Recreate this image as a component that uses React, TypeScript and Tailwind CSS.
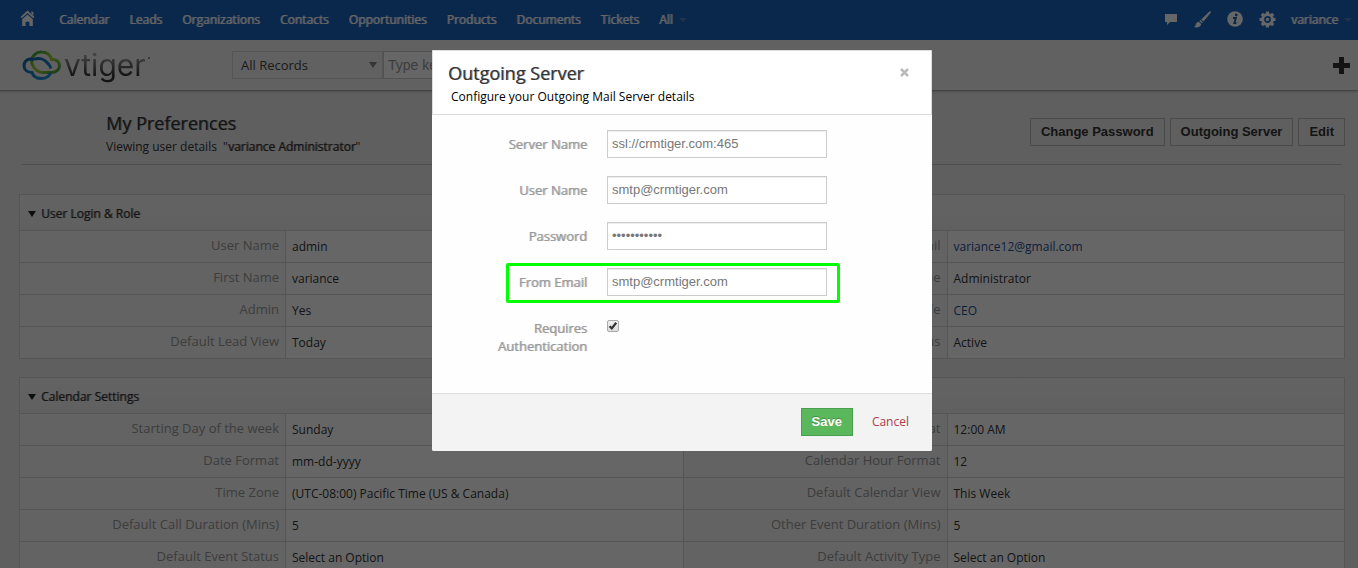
import { useState } from "react";

type Field = { label: string; value: string; link?: boolean };

const navItems = [
  "Calendar",
  "Leads",
  "Organizations",
  "Contacts",
  "Opportunities",
  "Products",
  "Documents",
  "Tickets",
];

const loginRows: [Field, Field][] = [
  [
    { label: "User Name", value: "admin" },
    { label: "Primary Email", value: "variance12@gmail.com", link: true },
  ],
  [
    { label: "First Name", value: "variance" },
    { label: "Last Name", value: "Administrator" },
  ],
  [
    { label: "Admin", value: "Yes" },
    { label: "Role", value: "CEO", link: true },
  ],
  [
    { label: "Default Lead View", value: "Today" },
    { label: "Status", value: "Active" },
  ],
];

const calendarRows: [Field, Field][] = [
  [
    { label: "Starting Day of the week", value: "Sunday" },
    { label: "Day starts at", value: "12:00 AM" },
  ],
  [
    { label: "Date Format", value: "mm-dd-yyyy" },
    { label: "Calendar Hour Format", value: "12" },
  ],
  [
    { label: "Time Zone", value: "(UTC-08:00) Pacific Time (US & Canada)" },
    { label: "Default Calendar View", value: "This Week" },
  ],
  [
    { label: "Default Call Duration (Mins)", value: "5" },
    { label: "Other Event Duration (Mins)", value: "5" },
  ],
  [
    { label: "Default Event Status", value: "Select an Option" },
    { label: "Default Activity Type", value: "Select an Option" },
  ],
];

export default function App() {
  const [open, setOpen] = useState(true);

  return (
    <div className="h-screen overflow-hidden bg-[#ededed] font-['Open_Sans','Noto_Sans',sans-serif] text-xs text-[#333]">
      <NavBar />
      <SearchBar />
      <main>
        <PageTitle onOutgoing={() => setOpen(true)} />
        <div className="ml-[19px] mr-[13px] mt-[29px] space-y-[18px]">
          <DetailTable title="User Login & Role" rows={loginRows} />
          <DetailTable title="Calendar Settings" rows={calendarRows} />
        </div>
      </main>
      {open && <OutgoingServerDialog onClose={() => setOpen(false)} />}
    </div>
  );
}

function NavBar() {
  return (
    <nav className="flex h-10 items-center justify-between bg-[#1a61bf] pl-5 pr-1.5 text-white [text-shadow:1px_0_rgba(255,255,255,0.8)]">
      <div className="flex items-center gap-5">
        <a href="#home" aria-label="Home" className="mr-[3px] pb-1">
          <HomeIcon />
        </a>
        {navItems.map((item) => (
          <a key={item} href={`#${item.toLowerCase()}`}>
            {item}
          </a>
        ))}
        <button className="flex items-center gap-1.5 [text-shadow:inherit]">
          All <Caret />
        </button>
      </div>
      <div className="flex items-center">
        <div className="mr-[15px] flex items-center gap-4 pb-0.5">
          <button aria-label="Chat">
            <svg width="13" height="13" viewBox="0 0 13 13" fill="currentColor">
              <path d="M0 1h12v8H5l-3 3V9H0z" />
            </svg>
          </button>
          <button aria-label="Theme">
            <svg width="17" height="17" viewBox="0 0 17 17" fill="currentColor">
              <path d="M16.600 .3c.5.400.300 1-.1 1.700L9.500 10.600 7.200 8.400 15.200.7c.5-.5 1-.7 1.400-.4zM6.500 9l2.300 2.200-1 1.100-2.400-2.200zM4.700 10.700l2.500 2.300c-.2 2-1.700 3.300-4 3.400-1.500.1-2.500-.1-3.200-.6 1.400-.5 1.500-1.400 1.900-2.800.4-1.300 1.400-2.200 2.800-2.300z" />
            </svg>
          </button>
          <button aria-label="Info">
            <svg width="16" height="16" viewBox="0 0 16 16">
              <circle cx="8" cy="8" r="7.800" fill="currentColor" />
              <circle cx="9.200" cy="4" r="1.400" fill="#1a61bf" />
              <path
                d="M6 7h2.800L7.400 12h1.900"
                fill="none"
                stroke="#1a61bf"
                strokeWidth="1.900"
              />
            </svg>
          </button>
          <button aria-label="Settings">
            <GearIcon />
          </button>
        </div>
        <button className="flex items-center gap-1.5 [text-shadow:inherit]">
          variance <Caret />
        </button>
      </div>
    </nav>
  );
}

function SearchBar() {
  return (
    <header className="flex h-[51px] items-center justify-between border-b border-[#aaa] bg-[#f3f3f3] pl-[22px] pr-2 shadow-[0_1px_2px_rgba(0,0,0,0.2)]">
      <div className="flex items-center">
        <a href="#home" aria-label="vtiger" className="flex w-[210px] items-center gap-0.5">
          <CloudLogo />
          <span className="bg-linear-to-b from-[#aaa] from-20% to-[#333] to-80% bg-clip-text font-['Inter',sans-serif] text-[30px] leading-9 text-transparent">
            vtiger
          </span>
          <span className="-mt-3.5 size-0.5 rounded-full bg-[#777]" />
        </a>
        <select
          aria-label="Search in"
          className="h-7 w-[151px] appearance-none border border-[#d5d5d5] bg-[#f3f3f3] pl-2 pt-0.5 text-[13px] text-[#444]"
        >
          <option>All Records</option>
        </select>
        <span className="-ml-3.5 mr-1.5 border-x-4 border-t-[6px] border-x-transparent border-t-[#888]" />
        <input
          aria-label="Keyword"
          placeholder="Type keyword and press enter"
          className="h-7 w-[220px] border border-[#ccc] bg-white px-1 font-['Liberation_Sans',Arial,sans-serif] text-sm placeholder:text-[#999]"
        />
      </div>
      <button aria-label="Quick create">
        <svg width="17" height="17" viewBox="0 0 17 17" fill="#333">
          <path d="M6 0h5v6h6v5h-6v6H6v-6H0V6h6z" />
        </svg>
      </button>
    </header>
  );
}

function PageTitle({ onOutgoing }: { onOutgoing: () => void }) {
  const button =
    "h-7 border border-[#bbb] px-2.5 font-['Liberation_Sans',Arial,sans-serif] text-[13px] font-bold";

  return (
    <div className="ml-[22px] mr-4 flex h-[74px] items-start justify-between border-b border-[#c4c4c4] pl-[84px]">
      <div className="pt-5">
        <h1 className="text-lg leading-6 [text-shadow:1px_0_rgba(51,51,51,0.5)]">
          My Preferences
        </h1>
        <p className="leading-6">
          Viewing user details &nbsp;&quot;
          <span className="[text-shadow:1px_0_rgba(51,51,51,0.6)]">
            variance Administrator
          </span>
          &quot;
        </p>
      </div>
      <div className="-mr-[3px] flex gap-[5px] pt-[27px]">
        <button className={button}>Change Password</button>
        <button className={button} onClick={onOutgoing}>
          Outgoing Server
        </button>
        <button className={button}>Edit</button>
      </div>
    </div>
  );
}

function DetailTable({ title, rows }: { title: string; rows: [Field, Field][] }) {
  return (
    <table className="w-full table-fixed border-collapse border border-[#d5d5d5]">
      <colgroup>
        <col className="w-[266px]" />
        <col className="w-[30%]" />
        <col className="w-[264px]" />
        <col />
      </colgroup>
      <thead>
        <tr className="h-9 bg-linear-to-b from-[#f8f8f8] to-[#f0f0f0]">
          <th colSpan={4} className="pl-2 pt-0.5 text-left font-normal">
            <span className="flex items-center gap-[5px]">
              <span className="border-x-4 border-t-[6px] border-x-transparent border-t-[#222]" />
              <span className="[text-shadow:1px_0_rgba(51,51,51,0.5)]">{title}</span>
            </span>
          </th>
        </tr>
      </thead>
      <tbody>
        {rows.map((row) => (
          <tr key={row[0].label} className="h-8 border-t border-[#d5d5d5]">
            {row.map((field) => (
              <FieldCells key={field.label} {...field} />
            ))}
          </tr>
        ))}
      </tbody>
    </table>
  );
}

function FieldCells({ label, value, link }: Field) {
  return (
    <>
      <th
        scope="row"
        className="bg-[#f7f7f7] pb-1 pr-1.5 text-right text-[13px] font-normal leading-[18px] text-[#999]"
      >
        {label}
      </th>
      <td className="border-x border-[#d5d5d5] bg-white pl-1.5 leading-[18px]">
        {link ? (
          <a href="#link" className="text-[#1f4f96]">
            {value}
          </a>
        ) : (
          value
        )}
      </td>
    </>
  );
}

function OutgoingServerDialog({ onClose }: { onClose: () => void }) {
  return (
    <div className="fixed inset-0 flex items-start justify-center bg-black/60 pl-1.5 pt-[50px]">
      <form
        role="dialog"
        aria-labelledby="dialog-title"
        onSubmit={(e) => e.preventDefault()}
        className="w-[500px] overflow-hidden rounded-xs bg-[#fefefe]"
      >
        <div className="flex h-[65px] items-start justify-between border border-[#ddd] bg-white pl-[15px] pr-[22px] pt-2.5">
          <div>
            <h2
              id="dialog-title"
              className="text-lg leading-6 [text-shadow:1px_0_rgba(51,51,51,0.5)]"
            >
              Outgoing Server
            </h2>
            <p className="pl-[3px] leading-6 text-black">
              Configure your Outgoing Mail Server details
            </p>
          </div>
          <button type="button" aria-label="Close" onClick={onClose} className="mt-[7px]">
            <svg width="9" height="9" viewBox="0 0 9 9" stroke="#bbb" strokeWidth="2.500">
              <path d="M1 1l7 7M8 1L1 8" />
            </svg>
          </button>
        </div>
        <div className="space-y-[18px] px-[15px] pb-[38px] pt-[15px]">
          <FormRow id="server" label="Server Name" value="ssl://crmtiger.com:465" />
          <FormRow id="user" label="User Name" value="smtp@crmtiger.com" />
          <FormRow id="password" label="Password" value="secret12345" type="password" />
          <FormRow id="from" label="From Email" value="smtp@crmtiger.com" highlight />
          <div className="flex gap-5">
            <FormLabel id="auth" label="Requires Authentication" />
            <AuthCheckbox />
          </div>
        </div>
        <div className="flex h-[58px] items-center justify-end gap-[19px] border-t border-[#ddd] bg-[#f3f3f3] pb-px pr-[23px]">
          <button
            type="submit"
            className="h-7 border border-[#4a9e4f] bg-[#5bb75b] px-2.5 font-['Liberation_Sans',Arial,sans-serif] text-[13px] font-bold text-white [text-shadow:0_-1px_0_rgba(0,0,0,0.25)]"
          >
            Save
          </button>
          <button type="button" onClick={onClose} className="text-[#b03a48]">
            Cancel
          </button>
        </div>
      </form>
    </div>
  );
}

function FormLabel({ id, label }: { id: string; label: string }) {
  return (
    <label
      htmlFor={id}
      className="w-[140px] pl-10 pt-[5px] text-right text-[13px] leading-[18px] text-[#999] [text-shadow:1px_0_rgba(153,153,153,0.7)]"
    >
      {label}
    </label>
  );
}

interface FormRowProps {
  id: string;
  label: string;
  value: string;
  type?: string;
  highlight?: boolean;
}

function FormRow({ id, label, value, type = "text", highlight }: FormRowProps) {
  return (
    <div className="relative flex gap-5">
      <FormLabel id={id} label={label} />
      <input
        id={id}
        type={type}
        defaultValue={value}
        className="h-7 w-[220px] border border-[#ccc] bg-white px-1 pb-0.5 font-['Liberation_Sans',Arial,sans-serif] text-[13px] text-[#777] shadow-[inset_0_1px_1px_rgba(0,0,0,0.075)]"
      />
      {highlight && (
        <span className="pointer-events-none absolute -bottom-[7px] -top-[5px] left-[59px] w-[334px] rounded-xs border-3 border-[#00ff00]" />
      )}
    </div>
  );
}

function AuthCheckbox() {
  const [checked, setChecked] = useState(true);

  return (
    <span className="relative mt-1.5 size-3">
      <input
        id="auth"
        type="checkbox"
        checked={checked}
        onChange={(e) => setChecked(e.target.checked)}
        className="block size-3 appearance-none rounded-xs border border-[#aaa] bg-linear-to-b from-[#eee] to-[#ddd]"
      />
      {checked && (
        <svg
          width="12"
          height="12"
          viewBox="0 0 12 12"
          className="pointer-events-none absolute inset-0"
          fill="none"
          stroke="#333"
          strokeWidth="2.200"
        >
          <path d="M2.500 6.200L4.800 8.400L9.200 2.800" />
        </svg>
      )}
    </span>
  );
}

function Caret() {
  return <span className="border-x-4 border-t-4 border-x-transparent border-t-[#4d7fc0]" />;
}

function HomeIcon() {
  return (
    <svg width="16" height="16" viewBox="0 0 16 16" fill="currentColor">
      <path d="M7.500 .5l7 6.500-1.200 1.300L7.500 3 1.700 8.300.5 7z" />
      <path d="M7.500 4.500l5.300 4.800V16H9.400v-4.200H5.600V16H2.200V9.300z" />
      <path d="M11.500 1l2 1.600v3l-2-1.800z" />
    </svg>
  );
}

function GearIcon() {
  return (
    <svg width="17" height="17" viewBox="0 0 17 17" fill="none" stroke="currentColor">
      <circle cx="8.500" cy="8.500" r="4.900" strokeWidth="3" />
      <circle cx="8.500" cy="8.500" r="1.700" fill="currentColor" stroke="none" />
      <path
        strokeWidth="3.200"
        d="M8.500 .5v2.500M8.500 14v2.500M.5 8.500h2.500M14 8.500h2.500M2.800 2.800l1.700 1.700M12.500 12.500l1.700 1.700M2.800 14.200l1.700-1.700M12.500 4.500l1.700-1.700"
      />
    </svg>
  );
}

function CloudLogo() {
  return (
    <svg width="40" height="30" viewBox="0 0 40 30" fill="none" strokeWidth="3">
      <defs>
        <linearGradient id="cloudTop" x1="0" y1="0" x2="1" y2="1">
          <stop offset="0" stopColor="#2f9c3c" />
          <stop offset="0.500" stopColor="#a5cc3a" />
          <stop offset="1" stopColor="#3c9c3c" />
        </linearGradient>
        <linearGradient id="cloudBottom" x1="0" y1="0" x2="1" y2="1">
          <stop offset="0" stopColor="#1560b0" />
          <stop offset="1" stopColor="#1e9ad6" />
        </linearGradient>
      </defs>
      <path
        stroke="url(#cloudTop)"
        d="M10 14C8 6 15 1.500 20 2c5 .300 8.500 3.500 9.500 7.500 5-.5 8 2.500 8 6s-3 7-7.500 7H21c-5 0-9-4-11-8.500"
      />
      <path
        stroke="url(#cloudBottom)"
        d="M12 9.500C6 8 2 11 2 15.500s3.500 7 8 7c1 3.500 4.500 6 9.500 6 4.500 0 8-2.500 9.500-6M12 9.500c4-2 9-1 12 2 2.500 2 4 4.500 5 7"
      />
    </svg>
  );
}
